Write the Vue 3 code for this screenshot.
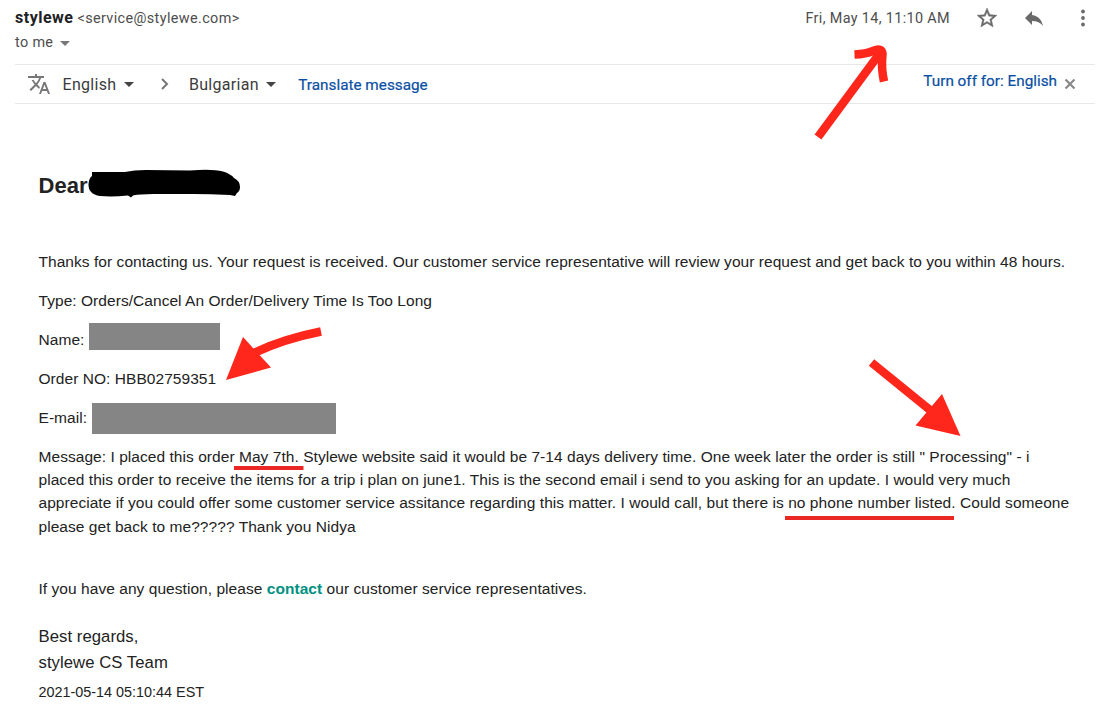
<script setup>
import { ref } from "vue";

const details = ref([
  { label: "Type:", value: "Orders/Cancel An Order/Delivery Time Is Too Long" },
  { label: "Name:", hidden: "name" },
  { label: "Order NO:", value: "HBB02759351" },
  { label: "E-mail:", hidden: "email" },
]);

const messageLines = [
  'Message: I placed this order May 7th. Stylewe website said it would be 7-14 days delivery time. One week later the order is still " Processing" - i',
  "placed this order to receive the items for a trip i plan on june1. This is the second email i send to you asking for an update. I would very much",
  "appreciate if you could offer some customer service assitance regarding this matter. I would call, but there is no phone number listed. Could someone",
  "please get back to me????? Thank you Nidya",
];
</script>

<template>
  <div class="mail">
    <header class="header">
      <div class="sender">
        <div class="from"><b>stylewe</b><span class="address">&lt;service@stylewe.com&gt;</span></div>
        <div class="to">to me <i class="caret"></i></div>
      </div>
      <div class="meta">
        <span class="date">Fri, May 14, 11:10 AM</span>
        <svg class="star" width="24" height="24" viewBox="0 0 24 24">
          <path d="M22 9.24l-7.19-.62L12 2 9.19 8.63 2 9.24l5.46 4.73L5.82 21 12 17.27 18.18 21l-1.63-7.03L22 9.24zM12 15.4l-3.76 2.27 1-4.28-3.32-2.88 4.38-.38L12 6.1l1.71 4.04 4.38.38-3.32 2.88 1 4.28L12 15.4z" />
        </svg>
        <svg class="reply" width="24" height="24" viewBox="0 0 24 24">
          <path d="M10 9V5l-7 7 7 7v-4.1c5 0 8.5 1.6 11 5.1-1-5-4-10-11-11z" />
        </svg>
        <svg class="more" width="24" height="24" viewBox="0 0 24 24">
          <circle cx="12" cy="5.5" r="1.9" /><circle cx="12" cy="12" r="1.9" /><circle cx="12" cy="18.5" r="1.9" />
        </svg>
      </div>
    </header>

    <div class="translate">
      <svg class="lang-icon" width="24" height="24" viewBox="0 0 24 24">
        <path d="M12.87 15.07l-2.54-2.51.03-.03A17.52 17.52 0 0 0 14.07 6H17V4h-7V2H8v2H1v2h11.17C11.5 7.92 10.44 9.75 9 11.35 8.07 10.32 7.3 9.19 6.69 8h-2c.73 1.63 1.73 3.17 2.98 4.56l-5.09 5.02L4 19l5-5 3.11 3.11.76-2.04zM18.5 10h-2L12 22h2l1.12-3h4.75L21 22h2l-4.5-12zm-2.62 7l1.62-4.33L19.12 17h-3.24z" />
      </svg>
      <span class="lang source">English</span><i class="caret dark"></i>
      <svg class="chevron" width="10" height="14" viewBox="0 0 10 14">
        <path d="M2 2l5 5-5 5" />
      </svg>
      <span class="lang target">Bulgarian</span><i class="caret dark"></i>
      <a class="link action">Translate message</a>
      <a class="link turn-off">Turn off for: English</a>
      <svg class="close" width="12" height="12" viewBox="0 0 12 12">
        <path d="M1.5 1.5l9 9M10.5 1.5l-9 9" />
      </svg>
    </div>

    <main class="body">
      <h2 class="dear">Dear</h2>
      <p class="intro">Thanks for contacting us. Your request is received. Our customer service representative will review your request and get back to you within 48 hours.</p>
      <p v-for="item in details" :key="item.label" class="detail">
        <span>{{ item.label }} {{ item.value }}</span>
        <span v-if="item.hidden" class="hidden" :class="item.hidden"></span>
      </p>
      <p class="message">
        <span v-for="line in messageLines" :key="line" class="line">{{ line }}</span>
      </p>
      <p class="question">If you have any question, please <a class="contact">contact</a> our customer service representatives.</p>
      <div class="regards">Best regards,<br />stylewe CS Team</div>
      <div class="stamp">2021-05-14 05:10:44 EST</div>
    </main>

    <!-- hand-drawn marks over the mail -->
    <svg class="marks" width="1099" height="716" viewBox="0 0 1099 716">
      <path class="scribble" d="M92 172L125 172Q134 170 146 170L190 170.5Q212 168.5 223 171.5Q231 174 234 178Q240 181 240 187Q240 191 237 193L235 196L230 195Q210 194 193 194L153 194Q140 194 133 195.5L131 197.5L128 195.5Q112 197 100 196Q88 194 88.5 184Q89 178 92 176Z" />
      <path class="stroke" d="M818 137L880 53" />
      <path class="stroke" d="M854.5 54.5Q866 54 873 51Q882 47 882.5 54Q881 68 884 81.5" />
      <path class="stroke" d="M321 331.5Q283 339 254 353" />
      <path class="head" d="M243 337L271 367.5L226 380Z" />
      <path class="stroke" d="M871.5 362.5L930 410" />
      <path class="head" d="M942 394L915.5 425.5L960.5 436Z" />
      <path class="underline" d="M234 468H303.5M785 518H954" />
    </svg>
  </div>
</template>

<style>
body {
  margin: 0;
  background: #fff;
}
</style>

<style scoped>
.mail {
  position: relative;
  width: 1099px;
  height: 716px;
  overflow: hidden;
  font-family: "Liberation Sans", Arial, sans-serif;
  color: #222;
  white-space: nowrap;
}

p,
h2 {
  margin: 0;
}

.header {
  display: flex;
  justify-content: space-between;
  height: 64px;
  padding-left: 15px;
  font-family: Roboto, sans-serif;
  box-sizing: border-box;
}

.from {
  padding-top: 8px;
  line-height: 20px;
  font-size: 16px;
}

.from b {
  color: #202124;
  letter-spacing: 0.5px;
}

.address {
  margin-left: 4px;
  font-size: 14.4px;
  letter-spacing: 0.38px;
  color: #4d4d4d;
}

.to {
  display: flex;
  align-items: center;
  margin-top: 4px;
  line-height: 20px;
  font-size: 14.4px;
  letter-spacing: 0.35px;
  color: #4d4d4d;
}

.caret {
  width: 0;
  margin-left: 7px;
  border: 5px solid transparent;
  border-top-color: #777;
  border-bottom: 0;
}

.caret.dark {
  margin-left: 7.5px;
  border-top-color: #444;
}

.meta {
  display: flex;
  align-items: center;
  height: 36px;
}

.date {
  font-size: 14.4px;
  letter-spacing: 0.35px;
  color: #4d4d4d;
}

.star,
.reply,
.more {
  fill: #6a6a6a;
}

.star {
  margin-left: 25px;
  stroke: #6a6a6a;
  stroke-width: 0.4;
}

.reply {
  margin-left: 23px;
}

.more {
  margin: 0 4px 0 25px;
}

.translate {
  display: flex;
  align-items: center;
  height: 40px;
  margin: 0 4px 0 15px;
  padding-left: 12px;
  border-top: 1px solid #e8e8e8;
  border-bottom: 1px solid #e8e8e8;
  box-sizing: border-box;
  font-family: Roboto, sans-serif;
  font-size: 16px;
}

.lang-icon {
  fill: #777;
}

.lang {
  color: #3c3c3c;
  letter-spacing: 0.3px;
}

.source {
  margin-left: 11.5px;
}

.chevron {
  margin: 0 18.5px 0 26.5px;
  fill: none;
  stroke: #777;
  stroke-width: 2;
}

.link {
  color: #0b4fa3;
  font-size: 15.3px;
  -webkit-text-stroke: 0.2px #0b4fa3;
}

.action {
  margin: 1px 0 0 22px;
}

.turn-off {
  margin: -7px 7px 0 auto;
}

.close {
  margin-right: 19px;
  fill: none;
  stroke: #888;
  stroke-width: 2.2;
}

.body {
  padding: 69px 0 0 38.5px;
  font-size: 15.5px;
  line-height: 23.2px;
  letter-spacing: 0.05px;
}

.dear {
  height: 77px;
  font-size: 22px;
  line-height: 26px;
}

.intro,
.detail {
  height: 39px;
}

.detail {
  display: flex;
}

.hidden {
  background: #858585;
}

.hidden.name {
  width: 131px;
  height: 27px;
  margin: -5px 0 0 5px;
}

.hidden.email {
  width: 244px;
  height: 31px;
  margin: -3px 0 0 5px;
}

.line {
  display: block;
}

.question {
  margin-top: 39.2px;
}

.contact {
  font-weight: bold;
  color: #009080;
}

.regards {
  margin-top: 24px;
  font-size: 16.7px;
  line-height: 26px;
}

.stamp {
  margin-top: 5px;
  font-size: 14.4px;
  letter-spacing: 0;
}

.marks {
  position: absolute;
  top: 0;
  left: 0;
}

.scribble {
  fill: #000;
}

.stroke {
  fill: none;
  stroke: #ff261c;
  stroke-width: 8.5;
}

.head {
  fill: #ff261c;
}

.underline {
  fill: none;
  stroke: #eb2724;
  stroke-width: 4;
}
</style>
